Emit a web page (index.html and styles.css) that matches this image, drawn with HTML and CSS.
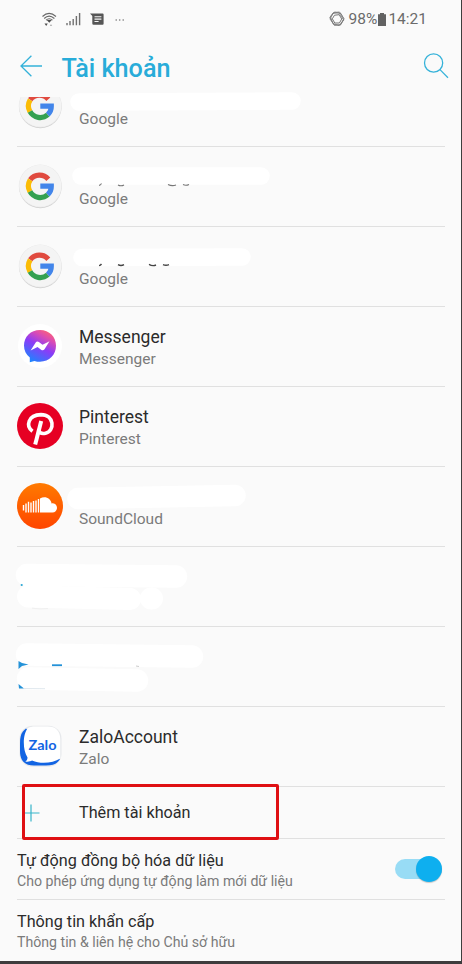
FILE: index.html
```html
<!DOCTYPE html>
<html lang="vi">
<head>
<meta charset="utf-8">
<title>Tài khoản</title>
<link rel="stylesheet" href="styles.css">
</head>
<body>
<svg width="0" height="0" class="defs" aria-hidden="true">
  <defs>
    <linearGradient id="msg" x1="0.2" y1="1" x2="0.75" y2="0">
      <stop offset="0" stop-color="#1689ff"/><stop offset="0.5" stop-color="#8b3cf7"/><stop offset="0.78" stop-color="#d94bb5"/><stop offset="1" stop-color="#ff6474"/>
    </linearGradient>
    <linearGradient id="sc" x1="0" y1="0" x2="0" y2="1">
      <stop offset="0" stop-color="#ff7a00"/><stop offset="1" stop-color="#ff4500"/>
    </linearGradient>
    <symbol id="google" viewBox="0 0 46 46">
      <circle cx="23.300" cy="24" r="21.200" fill="#cfcfcf"/>
      <circle cx="23.300" cy="23" r="21.500" fill="#e8e8e8"/>
      <circle cx="23.300" cy="22.800" r="21" fill="#f4f4f4"/>
      <g fill="none" stroke-width="5.200">
        <path stroke="#e04a3f" d="M31.300 16.200A11.600 11.600 0 0 0 13.200 16.800"/>
        <path stroke="#fbbc05" d="M13.200 16.800A11.600 11.600 0 0 0 13 28.600"/>
        <path stroke="#34a050" d="M13 28.600A11.600 11.600 0 0 0 30.800 31.600"/>
        <path stroke="#4285ea" d="M30.800 31.600A11.600 11.600 0 0 0 34.300 23.100H23.300"/>
      </g>
    </symbol>
  </defs>
</svg>
<main class="screen">
  <header class="status">
    <div class="status-left">
      <svg width="17" height="16" viewBox="0 0 17 16" fill="none" stroke="#686868" stroke-width="1.100">
        <path d="M1.500 5.500Q8 -.8 15 5.500M3.200 7.500Q8 2.800 13.400 7.500M5 9.200Q8.200 6.400 11.500 9.200"/>
        <path d="M5.700 9L8.300 11.800 10.800 9ZM3.500 12.500H6.800L5.200 15Z" fill="#505050" stroke="none"/>
        <path d="M8.800 14.800L10 13.200 11.200 14.800Z" fill="#999" stroke="none"/>
      </svg>
      <svg width="15" height="14" viewBox="0 0 15 14" stroke="#707070" stroke-width="1.400">
        <path d="M1 11V13.200M4 9V13.200M7.200 7V13.200M10.400 4V13.200M13.600 1V13.200"/>
      </svg>
      <svg class="note" width="14" height="13" viewBox="0 0 14 13">
        <path d="M0 .6H12.600Q13.600.6 13.600 1.600V10.800Q13.600 11.800 12.600 11.800H3.500Q2.300 11.800 2.300 10.600V3Z" fill="#565656"/>
        <path d="M4.500 3.700H11.400M4.500 6.100H11.400M4.500 8.500H8.600" stroke="#f5f5f5" stroke-width="1.100"/>
      </svg>
      <svg class="dots" width="10" height="4" viewBox="0 0 10 4" fill="#777"><circle cx="1.200" cy="2" r=".8"/><circle cx="4.700" cy="2" r=".8"/><circle cx="8.200" cy="2" r=".8"/></svg>
    </div>
    <div class="status-right">
      <svg width="16" height="16" viewBox="0 0 16 16" fill="none" stroke="#777" stroke-width=".8">
        <path d="M4.500 1.500L10.500 1L15 7.500L12 13.500L5.500 14.500L1 8Z"/>
        <path d="M3.500 2.500L10 1.800L14.300 8.500L11.200 14.300L4.800 13.500L.8 6.500Z"/>
        <path d="M5.500 1L12 2.500L15 9L10 14.500L4 12.500L1.500 6Z"/>
        <path d="M5.500 4.200L10.200 3.700L12.700 8L10.400 12L5.800 12L3.300 7.800Z" stroke-width="1"/>
      </svg>
      <span class="percent">98%</span>
      <svg class="battery" width="8" height="13" viewBox="0 0 8 13"><path d="M2 0H6V1.200H8V13H0V1.200H2Z" fill="#626262"/></svg>
      <span>14:21</span>
    </div>
  </header>
  <div class="appbar">
    <svg width="23" height="22" viewBox="0 0 23 22" fill="none" stroke="#35b2d9" stroke-width="1.300"><path d="M11.400.8L1 11L11.400 21.200M1 11H22"/></svg>
    <h1>Tài khoản</h1>
    <svg class="search" width="26" height="26" viewBox="0 0 26 26" fill="none" stroke="#35b2d9" stroke-width="1.300"><circle cx="10.600" cy="10" r="9.100"/><path d="M17 16.600L25 24.800"/></svg>
  </div>
  <ul class="accounts">
    <li class="row partial">
      <svg class="icon"><use href="#google"/></svg>
      <div class="labels"><span class="sub">Google</span></div>
      <svg class="mask" viewBox="0 0 462 80"><path d="M79 35L292 34" stroke="#fff" stroke-width="17.500" stroke-linecap="round"/></svg>
    </li>
    <li class="row">
      <svg class="icon"><use href="#google"/></svg>
      <div class="labels"><span class="sub">Google</span></div>
      <svg class="mask" viewBox="0 0 462 80"><path d="M81 29L261 29" stroke="#fff" stroke-width="17.500" stroke-linecap="round"/>
        <path d="M99 38.400Q100.500 38.200 101.500 36.500M118 38Q121 39.600 124 38M168 37.500Q172 39.500 176 38M183 37.600Q186 39 189 37.400" fill="none" stroke="#777" stroke-width="1.100"/></svg>
    </li>
    <li class="row">
      <svg class="icon"><use href="#google"/></svg>
      <div class="labels"><span class="sub">Google</span></div>
      <svg class="mask" viewBox="0 0 462 80"><path d="M82 30.500L242 30" stroke="#fff" stroke-width="17.500" stroke-linecap="round"/>
        <path d="M99 38.600Q100.500 38.400 101.500 37M118 37.700Q121 39.400 124 37.700M149 37.300Q152.500 39.500 156 38M163 37.600Q166 39 169 37.600" fill="none" stroke="#444" stroke-width="1.400"/></svg>
    </li>
    <li class="row">
      <svg class="icon" viewBox="0 0 46 46"><circle cx="23" cy="23" r="22" fill="#fff"/><path d="M23 7C13.600 7 7 13.800 7 22.600C7 27.500 9 31.700 12.800 34.600V39.300L17.500 37.900C19.200 38.500 21 38.700 23 38.700C32.400 38.700 39 31.800 39 22.800C39 13.800 32.400 7 23 7Z" fill="url(#msg)"/><path d="M13.600 27.600L18.700 19.500Q20 17.800 21.900 19L25.500 21.700L32.500 18.300L27.500 26.200Q26 28 24.100 26.700L20.500 24.100Z" fill="#fff"/></svg>
      <div class="labels"><span class="name">Messenger</span><span class="sub">Messenger</span></div>
    </li>
    <li class="row">
      <svg class="icon" viewBox="0 0 46 46"><circle cx="23" cy="23" r="23" fill="#e60023"/><path d="M15.500 28.200C8.500 23 11 11.900 24 11.600C37.500 11.600 38.200 28 28.500 30.200C25.200 31 22.500 29.800 21.600 27.400" fill="none" stroke="#fff" stroke-width="3.600"/><path d="M24.200 18L18.200 41.500" stroke="#fff" stroke-width="4"/></svg>
      <div class="labels"><span class="name">Pinterest</span><span class="sub">Pinterest</span></div>
    </li>
    <li class="row">
      <svg class="icon" viewBox="0 0 46 46"><circle cx="23" cy="23" r="23" fill="url(#sc)"/><path d="M6.500 22V27.500M9 20.500V29.500M11.500 18.700V29.500M14 19.500V29.500M16.500 18V29.500M19 17.500V29.500M21.500 16V29.500" stroke="#fff" stroke-width="1.400"/><path d="M23 15.600C28 12.500 34 15.500 34.500 20.500C38 19.500 40 22.300 40 24.800C40 27.500 38 29.500 35.500 29.500H23Z" fill="#fff"/></svg>
      <div class="labels"><span class="sub">SoundCloud</span></div>
      <svg class="mask" viewBox="0 0 462 80"><path d="M78 31.500L235 28.500" stroke="#fff" stroke-width="21.500" stroke-linecap="round"/></svg>
    </li>
    <li class="row">
      <svg class="mask" viewBox="0 0 462 80"><g stroke="#fff" stroke-linecap="round"><path d="M27 28L176 29.500" stroke-width="22.500"/><path d="M28 49.500L130 52M151 51.500H152" stroke-width="22"/></g><circle cx="21.700" cy="38" r="1.100" fill="#2aa7d5"/><path d="M32 61.200Q40 62.500 48 61.500" fill="none" stroke="#f0f0f0"/></svg>
    </li>
    <li class="row">
      <svg class="mask" viewBox="0 0 462 80"><g stroke="#fff" stroke-linecap="round"><path d="M27 27.500L192 29.500" stroke-width="22.500"/><path d="M28 51.500L137 53.500" stroke-width="22.500"/></g><path d="M18.500 34L22 36L28.500 37.500L22 39L18.500 42ZM18.500 57L24 61.500H19Z" fill="#2492d8"/><path d="M52 38.200H62" stroke="#2492d8" stroke-width="1.800"/><path d="M24 61.500L45 61.700" stroke="#d8e2ea" stroke-width=".8"/><path d="M136 39L139 39.500" stroke="#ccc"/></svg>
    </li>
    <li class="row">
      <svg class="icon" viewBox="0 0 46 46"><rect x="2.500" y="2.800" width="42" height="41" rx="13" fill="#e6e8eb"/><path d="M9 5.500C4 9.500 3 13 3 21V28C3 38 8 42.500 17 42.500H29C36 42.500 40 41 43 36Z" fill="#1264e3"/><path d="M11 5C5.500 11 5.500 27 10.500 34.500C10.500 36.500 9.800 37.500 8.300 38.500C11 39 13.500 38.500 15 37.500C24 41.500 36 40 43.300 35.500V16C43.300 8 38.500 3.500 31 3.500H18C15 3.500 13 4 11 5Z" fill="#fff"/><text x="11.500" y="27.200" class="zalo" textLength="28" lengthAdjust="spacingAndGlyphs">Zalo</text></svg>
      <div class="labels"><span class="name">ZaloAccount</span><span class="sub">Zalo</span></div>
    </li>
    <li class="row add">
      <svg class="plus" width="16" height="18" viewBox="0 0 16 18" stroke="#38b5ca" stroke-width="1.200"><path d="M0 9H15.500M7 .5V17.500"/></svg>
      <span class="name">Thêm tài khoản</span>
      <div class="highlight"></div>
    </li>
  </ul>
  <section class="setting">
    <div class="text"><span class="name">Tự động đồng bộ hóa dữ liệu</span><span class="desc">Cho phép ứng dụng tự động làm mới dữ liệu</span></div>
    <div class="toggle"></div>
  </section>
  <section class="setting last">
    <div class="text"><span class="name">Thông tin khẩn cấp</span><span class="desc">Thông tin &amp; liên hệ cho Chủ sở hữu</span></div>
  </section>
</main>
</body>
</html>
```
FILE: styles.css
```css
* { box-sizing: border-box; }
body { margin: 0; background: #fafafa; font-family: Roboto, sans-serif; color: #2b2b2b; }
.defs { position: absolute; }
.screen { width: 462px; height: 964px; overflow: hidden; background: #fafafa; border-right: 1px solid #3e3e3e; border-bottom: 3px solid #3e3c3d; }
.status { height: 38px; padding: 0 34px 0 41px; display: flex; justify-content: space-between; align-items: center; color: #6b6b6b; font-size: 15.5px; }
.status-left { display: flex; align-items: center; gap: 8px; }
.note { margin-left: 1px; }
.dots { margin: 1px 0 0 3px; }
.status-right { display: flex; align-items: center; }
.percent { margin-left: 4px; }
.battery { margin: 0 2px 0 1px; }
.appbar { height: 59px; padding: 0 12px 3px 20px; display: flex; align-items: center; }
h1 { margin: 6px auto 0 18.5px; font-size: 25.2px; line-height: 30px; font-weight: 500; color: #28acd9; }
.accounts { list-style: none; margin: 0; padding: 0; }
.row { position: relative; height: 80px; padding: 0 17px; display: flex; align-items: center; }
.row::after { content: ""; position: absolute; left: 17px; right: 16px; bottom: 0; height: 1px; background: #e0e0e0; }
.partial { height: 50px; align-items: flex-end; }
.icon { width: 46px; height: 46px; flex: none; margin: 0 16px 1.5px 0; }
.partial .icon { margin-bottom: 18px; clip-path: inset(14px 0 0 0); }
.labels { height: 44px; margin-top: 1.5px; display: flex; flex-direction: column; justify-content: flex-end; }
.partial .labels { margin-bottom: 17px; }
.name { font-size: 16.2px; line-height: 22px; white-space: nowrap; }
.labels .name { font-size: 17.5px; }
.sub { font-size: 15.5px; line-height: 22px; color: #7b7b7b; }
.mask { position: absolute; left: 0; bottom: 0; width: 462px; height: 80px; pointer-events: none; }
.zalo { font: 700 13.5px Lato, sans-serif; fill: #1264e3; }
.add { height: 52px; padding-left: 24px; }
.plus { margin-right: 39px; }
.highlight { position: absolute; left: 22px; top: -3px; width: 257px; height: 56px; border: 3px solid #df0f13; border-radius: 2px; z-index: 1; }
.setting { height: 61px; margin: 0 16px 0 17px; display: flex; align-items: center; justify-content: space-between; border-bottom: 1px solid #e0e0e0; }
.setting.last { border: 0; }
.text { margin-top: 2px; display: flex; flex-direction: column; }
.setting .name { line-height: 21px; }
.desc { font-size: 14.15px; line-height: 20px; color: #7b7b7b; white-space: nowrap; }
.toggle { position: relative; width: 47px; height: 20px; margin-right: 3px; border-radius: 10px; background: #98dcf5; }
.toggle::after { content: ""; position: absolute; right: 0; top: -3px; width: 26px; height: 26px; border-radius: 50%; background: #0eafef; box-shadow: 0 1px 1px #0003; }
```
